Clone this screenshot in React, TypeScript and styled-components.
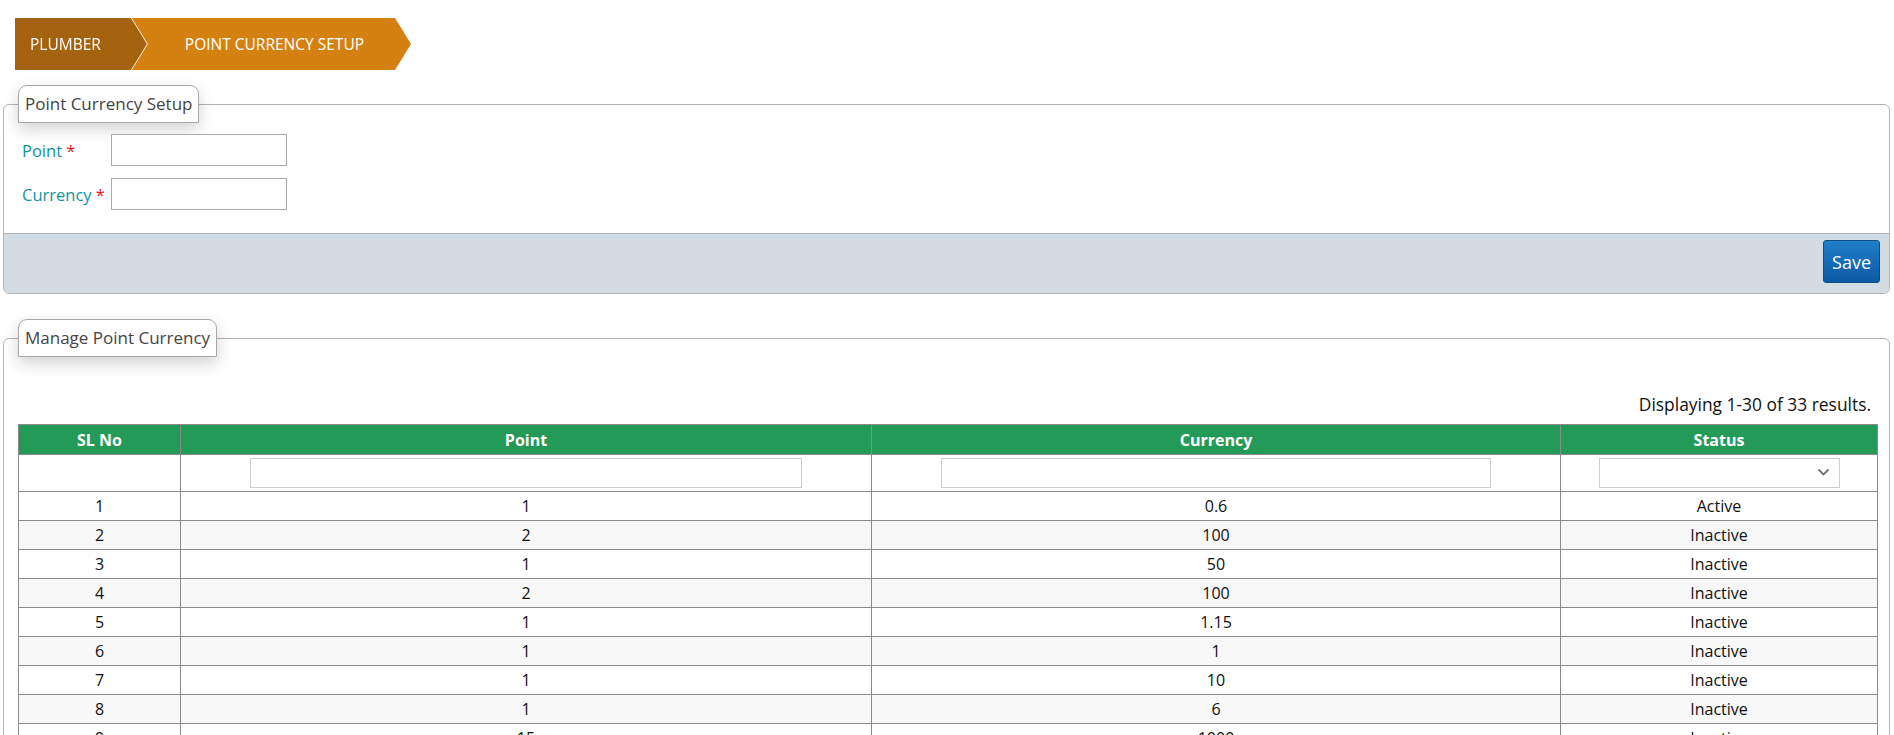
import React from 'react'
import styled, { createGlobalStyle } from 'styled-components'

const GlobalStyle = createGlobalStyle`
    html, body {
        margin: 0;
        padding: 0;
        overflow: hidden;
        background: #ffffff;
    }
    body {
        font-family: 'Open Sans', 'Noto Sans', sans-serif;
        color: #222;
    }
`

const Page = styled.div`
    padding: 0 4px 0 3px;
`

const Breadcrumbs = styled.div`
    display: flex;
    margin: 18px 0 0 12px;
    height: 52px;
`

const CrumbEdge = styled.div<{ $first?: boolean }>`
    position: relative;
    z-index: ${p => p.$first ? 2 : 1};
    margin-left: ${p => p.$first ? '0' : '-16px'};
    filter: ${p => p.$first ? 'drop-shadow(1px 0 0 rgba(255,255,255,0.85))' : 'none'};
`

const Crumb = styled.div<{ $bg: string; $padLeft: number; $padRight: number }>`
    height: 52px;
    display: flex;
    align-items: center;
    box-sizing: border-box;
    padding: 0 ${p => p.$padRight}px 0 ${p => p.$padLeft}px;
    background: ${p => p.$bg};
    color: #fff;
    font-size: 15.5px;
    text-transform: uppercase;
    clip-path: polygon(0 0, calc(100% - 16px) 0, 100% 50%, calc(100% - 16px) 100%, 0 100%);
`

const Fieldset = styled.fieldset<{ $top: number }>`
    margin: ${p => p.$top}px 0 0 0;
    padding: 0;
    border: 1px solid #b4b4b4;
    border-radius: 6px;
    min-width: 0;
`

const Legend = styled.legend`
    margin-left: 14px;
    padding: 4px 6px 4px 6px;
    line-height: 28px;
    font-size: 17px;
    color: #444;
    background: #fff;
    border: 1px solid #a8a8a8;
    border-radius: 9px 9px 0 0;
    box-shadow: 0 6px 16px rgba(0, 0, 0, 0.18);
`

const FormBody = styled.div`
    padding: 11px 18px 23px 18px;
    display: grid;
    grid-template-columns: 89px 176px;
    row-gap: 12px;
    align-items: center;
`

const Label = styled.label`
    font-size: 16.5px;
    color: #12939c;
    white-space: nowrap;
`

const Required = styled.span`
    color: #e4161b;
`

const TextInput = styled.input`
    box-sizing: border-box;
    width: 176px;
    height: 32px;
    border: 1px solid #ababab;
    padding: 0 6px;
    font: inherit;
    outline: none;
`

const ActionBar = styled.div`
    display: flex;
    justify-content: flex-end;
    padding: 6px 9px 10px 9px;
    background: #d4dce3;
    border-top: 1px solid #b4b4b4;
    border-radius: 0 0 5px 5px;
`

const SaveButton = styled.button`
    height: 43px;
    padding: 0 8px;
    border: 1px solid #0b4e88;
    border-radius: 3px;
    background: linear-gradient(#1f7fc8, #0b5aa3);
    color: #fff;
    font-family: inherit;
    font-size: 18px;
    cursor: pointer;
`

const ListBody = styled.div`
    padding: 36px 11px 0 14px;
`

const Summary = styled.div`
    text-align: right;
    padding-right: 7px;
    font-size: 17.4px;
    line-height: 22px;
    color: #111;
    margin-bottom: 9px;
`

const Table = styled.table`
    width: 100%;
    border-collapse: collapse;
    table-layout: fixed;
    font-size: 16px;
`

const Col = styled.col<{ $w?: number }>`
    width: ${p => p.$w ? `${p.$w}px` : 'auto'};
`

const Th = styled.th`
    height: 29px;
    padding: 0;
    background: #239a57;
    color: #fff;
    font-weight: 700;
    border: 1px solid #8a8a8a;
    text-align: center;
`

const FilterCell = styled.td`
    height: 36px;
    padding: 0;
    border: 1px solid #8a8a8a;
    text-align: center;
    vertical-align: middle;
`

const FilterInput = styled.input`
    box-sizing: border-box;
    width: 80%;
    height: 30px;
    border: 1px solid #cdcdcd;
    outline: none;
    display: block;
    margin: 0 auto;
`

const SelectWrap = styled.div`
    position: relative;
    width: 241px;
    margin: 0 auto;
`

const FilterSelect = styled.select`
    box-sizing: border-box;
    width: 100%;
    height: 30px;
    border: 1px solid #cdcdcd;
    background: #fff;
    appearance: none;
    outline: none;
`

const Chevron = styled.svg`
    position: absolute;
    right: 10px;
    top: 10px;
    pointer-events: none;
`

const Row = styled.tr<{ $shade: boolean }>`
    background: ${p => p.$shade ? '#f8f8f8' : '#fff'};
`

const Td = styled.td`
    height: 28px;
    padding: 0;
    border: 1px solid #8a8a8a;
    text-align: center;
    color: #111;
    line-height: 20px;
`

const rows = [
    { point: '1', currency: '0.6', status: 'Active' },
    { point: '2', currency: '100', status: 'Inactive' },
    { point: '1', currency: '50', status: 'Inactive' },
    { point: '2', currency: '100', status: 'Inactive' },
    { point: '1', currency: '1.15', status: 'Inactive' },
    { point: '1', currency: '1', status: 'Inactive' },
    { point: '1', currency: '10', status: 'Inactive' },
    { point: '1', currency: '6', status: 'Inactive' },
    { point: '15', currency: '1000', status: 'Inactive' },
]

const App = () => {
    return (
        <Page>
            <GlobalStyle />
            <Breadcrumbs>
                <CrumbEdge $first>
                    <Crumb $bg="#a6630f" $padLeft={15} $padRight={46}>Plumber</Crumb>
                </CrumbEdge>
                <CrumbEdge>
                    <Crumb $bg="#d58111" $padLeft={54} $padRight={47}>Point Currency Setup</Crumb>
                </CrumbEdge>
            </Breadcrumbs>

            <Fieldset $top={15}>
                <Legend>Point Currency Setup</Legend>
                <FormBody>
                    <Label htmlFor="point">Point <Required>*</Required></Label>
                    <TextInput id="point" />
                    <Label htmlFor="currency">Currency <Required>*</Required></Label>
                    <TextInput id="currency" />
                </FormBody>
                <ActionBar>
                    <SaveButton>Save</SaveButton>
                </ActionBar>
            </Fieldset>

            <Fieldset $top={25}>
                <Legend>Manage Point Currency</Legend>
                <ListBody>
                    <Summary>Displaying 1-30 of 33 results.</Summary>
                    <Table>
                        <colgroup>
                            <Col $w={162} />
                            <Col $w={691} />
                            <Col $w={689} />
                            <Col />
                        </colgroup>
                        <thead>
                            <tr>
                                <Th>SL No</Th>
                                <Th>Point</Th>
                                <Th>Currency</Th>
                                <Th>Status</Th>
                            </tr>
                            <tr>
                                <FilterCell />
                                <FilterCell><FilterInput /></FilterCell>
                                <FilterCell><FilterInput /></FilterCell>
                                <FilterCell>
                                    <SelectWrap>
                                        <FilterSelect defaultValue="">
                                            <option value=""></option>
                                            <option value="1">Active</option>
                                            <option value="0">Inactive</option>
                                        </FilterSelect>
                                        <Chevron width="13" height="9" viewBox="0 0 13 9">
                                            <path d="M1.5 1.5 L6.5 6.5 L11.5 1.5" fill="none" stroke="#6b737b" strokeWidth="1.8" />
                                        </Chevron>
                                    </SelectWrap>
                                </FilterCell>
                            </tr>
                        </thead>
                        <tbody>
                            {rows.map((r, i) => (
                                <Row key={i} $shade={i % 2 === 1}>
                                    <Td>{i + 1}</Td>
                                    <Td>{r.point}</Td>
                                    <Td>{r.currency}</Td>
                                    <Td>{r.status}</Td>
                                </Row>
                            ))}
                        </tbody>
                    </Table>
                </ListBody>
            </Fieldset>
        </Page>
    )
}

export default App
